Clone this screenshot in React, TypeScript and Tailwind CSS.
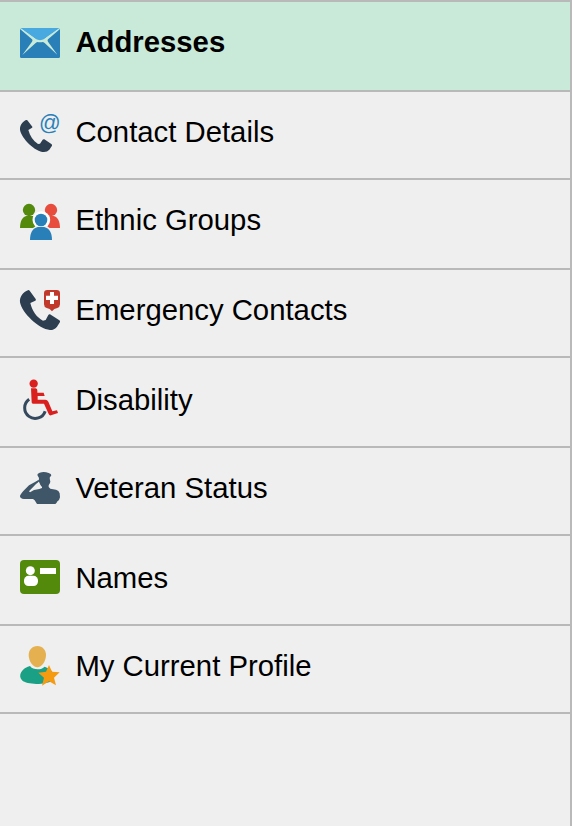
import type { ReactNode } from "react";

type Item = { label: string; height: string; textTop: string; viewBox: string; icon: ReactNode };

const items: Item[] = [
  {
    label: "Addresses",
    height: "h-[90px]",
    textTop: "mt-[23px]",
    viewBox: "0 0 180 165",
    icon: (
      <>
        <path fill="#48a8e0" d="M30 39H150L103 72Q90 79 77 72Z" />
        <path
          fill="#2980b9"
          d="M30 42L66 73Q69 76 66 80L37 120L77 84Q82 80 86 82H95Q99 80 104 84L142 119L114 80Q111 76 114 73L150 42V125Q150 129 146 129H34Q30 129 30 125Z"
        />
        <path fill="none" stroke="#c9ead8" strokeWidth="2.5" d="M31 40L77 73M149 40L103 73" />
      </>
    ),
  },
  {
    label: "Contact Details",
    height: "h-[88px]",
    textTop: "mt-[23px]",
    viewBox: "0 0 180 165",
    icon: (
      <>
        <path
          fill="#2c3e50"
          d="M48 45Q50 44 52 46L67 65Q68 67 65 69L55 75C60 93 69 107 84 117L90 116L98 104Q100 102 103 103L124 117Q127 119 126 122L118 134Q112 141 102 141C76 141 34 100 30 74C29 62 37 50 48 45Z"
        />
        <text
          x="87"
          y="74"
          fontSize="64"
          fill="#2980b9"
          fontFamily="Liberation Sans, sans-serif"
        >
          @
        </text>
      </>
    ),
  },
  {
    label: "Ethnic Groups",
    height: "h-[90px]",
    textTop: "mt-[23px]",
    viewBox: "0 -6 180 165",
    icon: (
      <>
        <circle cx="57" cy="45" r="18.5" fill="#538a0b" />
        <path fill="#538a0b" d="M30 99C30 80 37 65 49 63H70L80 99Z" />
        <circle cx="123" cy="45" r="18.5" fill="#e84c3d" />
        <path fill="#e84c3d" d="M150 99C150 80 143 65 131 63H112L105 99Z" />
        <circle cx="94" cy="75" r="26.5" fill="#fff" />
        <path fill="#efefef" d="M69 99L78 93H110L119 99V104H69Z" />
        <circle cx="93" cy="75" r="19" fill="#2980b9" />
        <path fill="#2980b9" d="M60 135C60 113 68 100 83 96H103C118 100 126 113 126 135Z" />
      </>
    ),
  },
  {
    label: "Emergency Contacts",
    height: "h-[88px]",
    textTop: "mt-[23px]",
    viewBox: "0 0 180 165",
    icon: (
      <>
        <path
          fill="#2c3e50"
          d="M54 22Q56 20 59 23L77 48Q79 51 76 53L61 60C66 83 80 103 99 113L107 111L115 96Q117 93 120 94L148 112Q151 114 150 117L141 131Q133 141 120 141C86 138 36 90 30 58C28 42 40 26 54 22Z"
        />
        <path
          fill="#c0392b"
          d="M112 21H140Q150 21 150 31V64Q150 72 142 75L133 78L126 85L119 78L110 75Q102 72 102 64V31Q102 21 112 21Z"
        />
        <path fill="#fff" d="M120 27H132V38.5H144V51H132V63H120V51H108V38.5H120Z" />
      </>
    ),
  },
  {
    label: "Disability",
    height: "h-[90px]",
    textTop: "mt-[25px]",
    viewBox: "0 -6 180 165",
    icon: (
      <>
        <path fill="none" stroke="#34495e" strokeWidth="9" d="M57.5 79A31.5 31.5 0 1 0 105.5 114.5" />
        <circle cx="71" cy="32" r="12.5" fill="#d9201f" />
        <path
          fill="#d9201f"
          d="M63 46H77Q82 47 82 52V59H101L104 69H83V80H106Q112 80 115 86L127 115L141 112L144 120L123 127Q118 128 116 123L102 92H69Q65 92 65 88Z"
        />
      </>
    ),
  },
  {
    label: "Veteran Status",
    height: "h-[88px]",
    textTop: "mt-[23px]",
    viewBox: "0 -6 180 165",
    icon: (
      <path
        fill="#3f5568"
        d="M82 36Q82 32 89 29Q102 24 116 30Q124 32 124 37L119 44L120 52Q122 55 120 60L116 67V72L121 77L138 80Q147 82 149 91L150 103L147 111L141 116L140 119L136 123H81L74 112L69 108H42Q30 107 30 100Q30 95 40 84L57 67L75 57L85 51L88 54L83 59L78 63L57 85L60 88L72 81L88 78L96 75V72Q91 68 89 61L86 55L87 45Z"
      />
    ),
  },
  {
    label: "Names",
    height: "h-[90px]",
    textTop: "mt-[25px]",
    viewBox: "0 -3 180 165",
    icon: (
      <>
        <rect x="30" y="30" width="120" height="102" rx="12" fill="#538a0b" />
        <circle cx="61" cy="62" r="13.5" fill="#fff" />
        <rect x="42" y="77.5" width="42" height="30.5" rx="13.5" fill="#fff" />
        <rect x="90" y="54" width="48" height="18" fill="#fff" />
      </>
    ),
  },
  {
    label: "My Current Profile",
    height: "h-[88px]",
    textTop: "mt-[23px]",
    viewBox: "0 3 180 165",
    icon: (
      <>
        <path fill="#e5b150" d="M82 24C98 24 108 36 108 51C108 70 95 88 82 88C69 88 56 70 56 51C56 36 66 24 82 24Z" />
        <path
          fill="#19a085"
          d="M60 84C68 96 94 97 104 86L119 93L130 105L128 128C112 139 52 143 36 127C22 112 37 89 60 84Z"
        />
        <path fill="#f59b12" d="M117 81L126 101L149 103L132 119L138 142L117 130L96 143L102 119L85 104L108 101Z" />
      </>
    ),
  },
];

export default function App() {
  return (
    <nav className="h-[826px] w-[572px] overflow-hidden border-t-2 border-r-2 border-[#b9b9b9] bg-[#efefef] font-['Liberation_Sans',Arial,sans-serif] text-black">
      <ul>
        {items.map((item, i) => (
          <li
            key={item.label}
            className={`flex items-start border-b-2 border-[#b9b9b9] pl-[10px] ${item.height} ${
              i === 0 ? "bg-[#c9ead8] font-bold" : ""
            }`}
          >
            <svg className="mt-[13px] h-[55px] w-[60px] shrink-0" viewBox={item.viewBox} aria-hidden="true">
              {item.icon}
            </svg>
            <span className={`ml-[5.4px] text-[29.3px] leading-[34px] whitespace-nowrap ${item.textTop}`}>
              {item.label}
            </span>
          </li>
        ))}
      </ul>
    </nav>
  );
}
